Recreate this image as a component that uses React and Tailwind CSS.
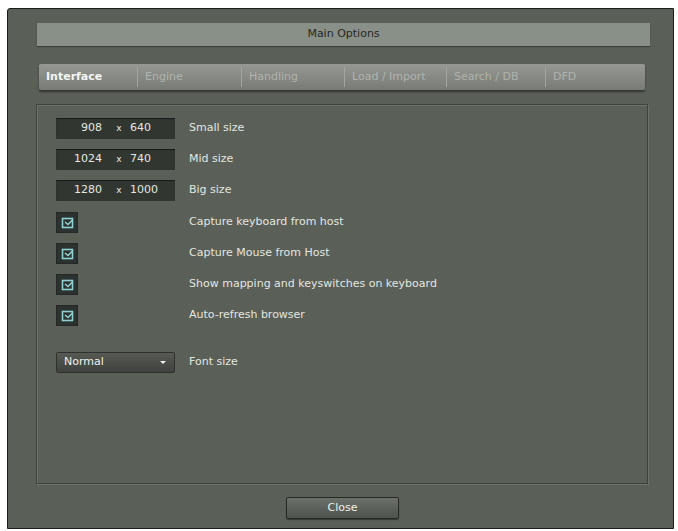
import React from "react";

const font = { fontFamily: '"DejaVu Sans", "Liberation Sans", sans-serif' };

function SizeBox({ w, h }) {
  return (
    <div className="w-[119px] h-[21px] bg-[#323631] shadow-[inset_0_1px_1px_rgba(0,0,0,0.5)] flex items-center text-[11px] text-[#e4e8e2]">
      <span className="w-[54px] text-right pr-[8px]">{w}</span>
      <span className="w-[18px] text-center text-[9px]">x</span>
      <span className="w-[47px] text-left pl-[2px]">{h}</span>
    </div>
  );
}

function Check() {
  return (
    <div className="w-[22px] h-[21px] bg-[#2c3230] flex items-center justify-center shadow-[inset_0_0_2px_rgba(0,0,0,0.6)]">
      <svg width="13" height="12" viewBox="0 0 13 12">
        <rect x="1.5" y="1.5" width="10" height="9" fill="none" stroke="#8fd0d0" strokeWidth="1.6" />
        <path d="M4 5 L7 7.5 L11.5 3" fill="none" stroke="#8fd0d0" strokeWidth="1.6" />
      </svg>
    </div>
  );
}

function Row({ left, label }) {
  return (
    <div className="flex items-center h-[21px]">
      <div className="w-[119px]">{left}</div>
      <span className="ml-[14px] text-[11px] text-[#e2e6e0]">{label}</span>
    </div>
  );
}

export default function App() {
  const tabs = ["Interface", "Engine", "Handling", "Load / Import", "Search / DB", "DFD"];
  const tabW = [98, 104, 103, 102, 99, 100];
  return (
    <div className="w-[678px] h-[531px] bg-white pt-[8px] pl-[7px]" style={font}>
      <div className="w-[667px] h-[521px] bg-[#5a5f58] border border-[#1c1e1b] rounded-tl-[3px] flex flex-col">
        <div className="ml-[29px] mt-[14px] w-[613px] h-[23px] bg-[#899087] shadow-[0_1px_1px_rgba(0,0,0,0.35)] flex items-center justify-center text-[11px] text-[#262925]">
          Main Options
        </div>
        <div className="ml-[31px] mt-[18px] w-[606px] h-[26px] rounded-[2px] bg-gradient-to-b from-[#959893] to-[#797c76] shadow-[0_2px_2px_rgba(0,0,0,0.45)] flex items-center">
          {tabs.map((t, i) => (
            <div
              key={t}
              className={
                "h-[20px] flex items-center pl-[7px] text-[11px] " +
                (i > 0 ? "border-l border-[#a4a7a1] " : "") +
                (i === 0 ? "text-[#f4f6f2] font-bold" : "text-[#b0b3ad]")
              }
              style={{ width: tabW[i] }}
            >
              {t}
            </div>
          ))}
        </div>
        <div className="ml-[28px] mt-[14px] w-[612px] h-[380px] border border-[#3f423d] shadow-[1px_1px_0_#6d726a,inset_1px_1px_0_#6d726a] pl-[19px] pt-[13px] flex flex-col">
          <div className="flex flex-col gap-[10px]">
            <Row left={<SizeBox w="908" h="640" />} label="Small size" />
            <Row left={<SizeBox w="1024" h="740" />} label="Mid size" />
            <Row left={<SizeBox w="1280" h="1000" />} label="Big size" />
          </div>
          <div className="flex flex-col gap-[10px] mt-[11px]">
            <Row left={<Check />} label="Capture keyboard from host" />
            <Row left={<Check />} label="Capture Mouse from Host" />
            <Row left={<Check />} label="Show mapping and keyswitches on keyboard" />
            <Row left={<Check />} label="Auto-refresh browser" />
          </div>
          <div className="mt-[26px]">
            <Row
              left={
                <div className="w-[119px] h-[21px] rounded-[2px] border border-[#2e312c] bg-gradient-to-b from-[#565a53] to-[#3f423d] flex items-center justify-between pl-[7px] pr-[8px] text-[11px] text-[#eef0ec]">
                  <span>Normal</span>
                  <span className="w-0 h-0 border-l-[3px] border-r-[3px] border-t-[3px] border-l-transparent border-r-transparent border-t-[#f0f0f0]" />
                </div>
              }
              label="Font size"
            />
          </div>
        </div>
        <div className="ml-[278px] mt-[13px] w-[113px] h-[22px] rounded-[2px] border border-[#262924] bg-gradient-to-b from-[#6c706a] to-[#4f534d] shadow-[0_1px_1px_rgba(0,0,0,0.4)] flex items-center justify-center text-[11px] text-[#eef0ec]">
          Close
        </div>
      </div>
    </div>
  );
}
